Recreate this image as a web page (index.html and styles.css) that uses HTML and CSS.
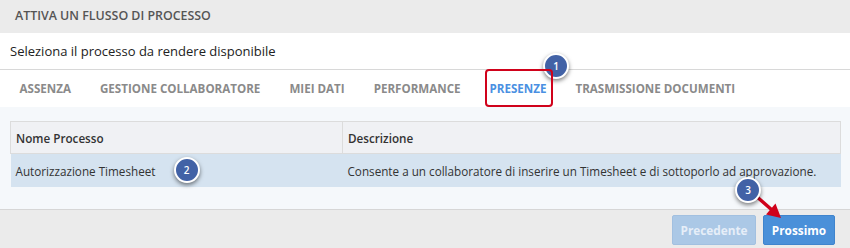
FILE: index.html
```html
<!DOCTYPE html>
<html>
<head>
  <title>Attiva un flusso di processo</title>
  <link rel="stylesheet" href="styles.css">
</head>
<body>
  <div class="dialog">
    <div class="dialog-title">ATTIVA UN FLUSSO DI PROCESSO</div>

    <div class="subtitle">Seleziona il processo da rendere disponibile</div>

    <div class="tabs">
      <span class="tab">ASSENZA</span>
      <span class="tab">GESTIONE COLLABORATORE</span>
      <span class="tab">MIEI DATI</span>
      <span class="tab">PERFORMANCE</span>
      <span class="tab active">PRESENZE<span class="step step-1">1</span></span>
      <span class="tab">TRASMISSIONE DOCUMENTI</span>
    </div>

    <div class="panel">
      <table class="process-table">
        <thead>
          <tr>
            <th class="col-name">Nome Processo</th>
            <th>Descrizione</th>
          </tr>
        </thead>
        <tbody>
          <tr class="selected">
            <td class="name-cell">Autorizzazione Timesheet<span class="step step-2">2</span></td>
            <td>Consente a un collaboratore di inserire un Timesheet e di sottoporlo ad approvazione.</td>
          </tr>
        </tbody>
      </table>
    </div>

    <div class="footer">
      <button class="btn btn-disabled">Precedente</button>
      <button class="btn btn-primary">Prossimo</button>
    </div>

    <!-- annotation 3 with arrow pointing at "Prossimo" -->
    <span class="step step-3">3</span>
    <svg class="arrow" width="40" height="32" viewBox="0 0 40 32">
      <line x1="4" y1="6" x2="20" y2="20" stroke="#d0021b" stroke-width="3.5" stroke-linecap="round"/>
      <polygon points="29,28 14,24.5 23.5,13.5" fill="#d0021b"/>
    </svg>
  </div>
</body>
</html>
```

FILE: styles.css
```css
body {
  margin: 0;
  padding: 0;
  font-family: 'Open Sans', sans-serif;
  background-color: #ebebeb;
  color: #333;
}

.dialog {
  position: relative;
  width: 850px;
  height: 248px;
  overflow: hidden;
}

.dialog-title {
  height: 33px;
  line-height: 31px;
  padding-left: 15px;
  font-size: 12.4px;
  font-weight: 600;
  color: #555;
  background-color: #ebebeb;
}

.subtitle {
  height: 36px;
  line-height: 36px;
  padding-left: 10px;
  font-size: 13px;
  color: #222;
  background-color: white;
  border-bottom: 1px solid #d8d8d8;
}

/* Tabs */
.tabs {
  display: flex;
  height: 37px;
  padding-left: 5px;
  background-color: white;
}

.tab {
  position: relative;
  display: flex;
  align-items: center;
  padding: 0 14.5px;
  font-size: 11.6px;
  font-weight: 700;
  color: #8a8a8a;
}

.tab.active {
  color: #4a90e2;
}

.tab.active::after {
  content: '';
  position: absolute;
  top: -1px;
  bottom: 0;
  left: 10px;
  right: 8px;
  border: 2px solid #d0021b;
  border-radius: 4px;
}

/* Table */
.panel {
  height: 103px;
  padding: 14px 9px 0 10px;
  box-sizing: border-box;
  background-color: #f5f8fb;
  border-bottom: 1px solid #d6d6d6;
}

.process-table {
  width: 100%;
  border-collapse: collapse;
  font-size: 11.7px;
}

.process-table th {
  height: 31px;
  padding: 0 5px;
  text-align: left;
  font-weight: 600;
  color: #333;
  background-color: #f0f1f4;
  border: 1px solid #dcdcdc;
}

.process-table .col-name {
  width: 321px;
}

.process-table td {
  height: 33px;
  padding: 0 5px;
  color: #333;
}

.process-table tr.selected td {
  background-color: #d5e3f0;
}

.name-cell {
  position: relative;
}

/* Footer */
.footer {
  display: flex;
  justify-content: flex-end;
  gap: 7px;
  padding: 5px 15px 0 0;
}

.btn {
  height: 30px;
  padding: 0;
  font-family: 'Open Sans', sans-serif;
  font-size: 11.8px;
  font-weight: 700;
  color: white;
  border-radius: 2px;
  cursor: pointer;
}

.btn-disabled {
  width: 84px;
  background-color: #abc8e6;
  border: 1px solid #a2c0e0;
  color: #e6eef8;
}

.btn-primary {
  width: 72px;
  background-color: #4a90d9;
  border: 1px solid #3f84cd;
}

/* Annotation badges */
.step {
  position: absolute;
  width: 22px;
  height: 22px;
  line-height: 22px;
  border: 2px solid white;
  border-radius: 50%;
  background-color: #4262a6;
  color: white;
  font-size: 10px;
  font-weight: 600;
  text-align: center;
  box-shadow: 0 2px 4px rgba(0, 0, 0, 0.5);
}

.step-1 {
  top: -17px;
  right: -8px;
}

.step-2 {
  top: 3px;
  left: 163px;
}

.step-3 {
  top: 177px;
  left: 735px;
  z-index: 2;
}

.arrow {
  position: absolute;
  top: 190px;
  left: 752px;
  z-index: 1;
}
```
